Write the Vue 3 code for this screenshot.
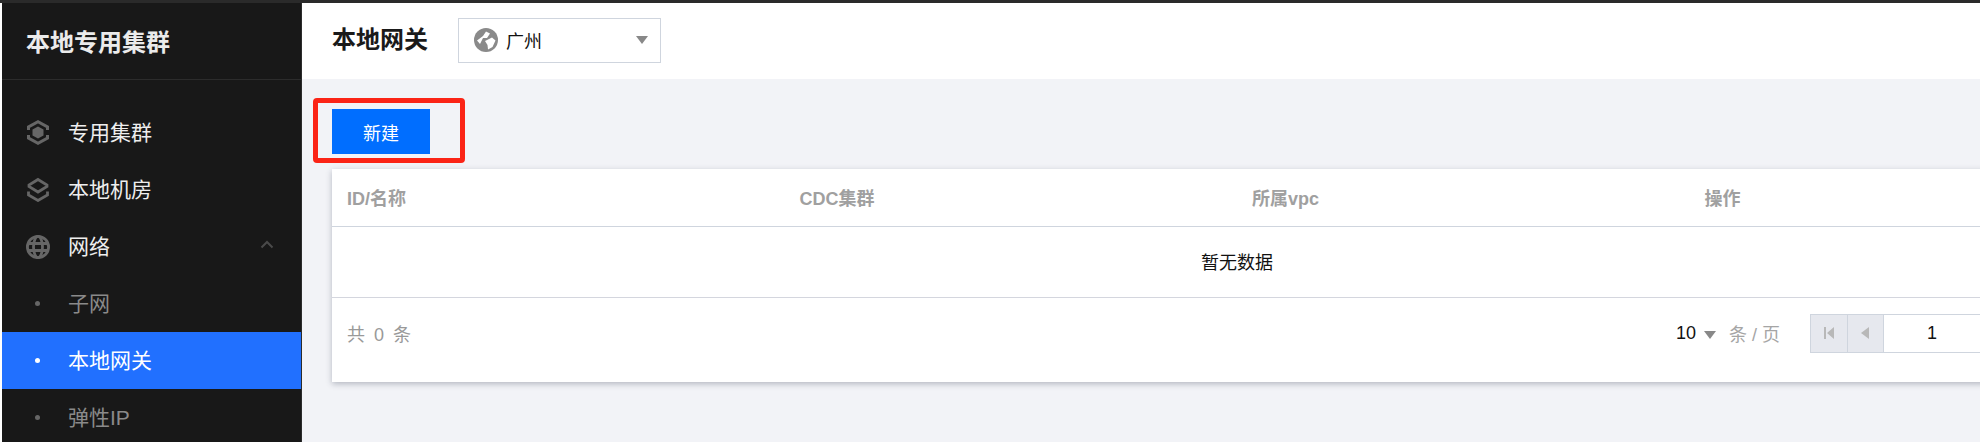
<script setup>
const columns = ['ID/名称', 'CDC集群', '所属vpc', '操作']
const topItems = [
  { label: '专用集群', icon: 'cluster' },
  { label: '本地机房', icon: 'layers' },
  { label: '网络', icon: 'globe', arrow: true }
]
const subItems = [
  { label: '子网' },
  { label: '本地网关', active: true },
  { label: '弹性IP' }
]
</script>

<template>
  <div class="page">
    <aside class="sidebar">
      <div class="side-head">本地专用集群</div>
      <nav class="menu">
        <div v-for="item in topItems" :key="item.label" class="item">
          <span class="icon-slot">
            <svg v-if="item.icon === 'cluster'" width="24" height="25" viewBox="0 0 24 25" fill="none">
              <path d="M2.500 10V7L12 1.800 21.500 7v3" stroke="#666" stroke-width="3"/>
              <path d="M2.500 15v3L12 23.200 21.500 18v-3" stroke="#666" stroke-width="3"/>
              <path d="M12 6.500l5.500 3v6l-5.500 3-5.500-3v-6z" fill="#666"/>
            </svg>
            <svg v-else-if="item.icon === 'layers'" width="24" height="25" viewBox="0 0 24 25" fill="none">
              <path d="M12 2.500 21 8v1.500L12 15 3 9.500V8z" stroke="#666" stroke-width="2.800"/>
              <path d="M2.500 14.500V18L12 23.500 21.500 18v-3.500" stroke="#666" stroke-width="2.800"/>
            </svg>
            <svg v-else width="24" height="24" viewBox="0 0 24 24" fill="none" stroke="#666" stroke-width="2.800">
              <circle cx="12" cy="12" r="10.600"/>
              <ellipse cx="12" cy="12" rx="4.500" ry="10.600"/>
              <path d="M2 8.500h20M2 15.500h20"/>
            </svg>
          </span>
          <span class="label">{{ item.label }}</span>
          <svg v-if="item.arrow" class="arrow" width="14" height="9" viewBox="0 0 14 9" fill="none">
            <path d="M1.500 7.500 7 2l5.500 5.500" stroke="#4a4a4a" stroke-width="2"/>
          </svg>
        </div>
        <div v-for="sub in subItems" :key="sub.label" class="item sub" :class="{ active: sub.active }">
          <span class="icon-slot"><i class="dot"></i></span>
          <span class="label">{{ sub.label }}</span>
        </div>
      </nav>
    </aside>

    <main class="main">
      <header class="topbar">
        <h1 class="title">本地网关</h1>
        <div class="region">
          <svg class="earth" width="24" height="24" viewBox="0 0 24 24">
            <circle cx="12" cy="12" r="12" fill="#8a8a8a"/>
            <path d="M3 12.500 9 8l3-4.500 4 2-3 4.500H9l-3 6zM11 13l7-3.500 3.500 3-3 6.500-4.500 2.500-.5-4.500z" fill="#fff"/>
          </svg>
          <span class="region-name">广州</span>
          <i class="caret"></i>
        </div>
      </header>

      <section class="content">
        <div class="toolbar">
          <button class="primary">新建</button>
          <div class="highlight"></div>
        </div>
        <div class="card">
          <div class="row thead">
            <div v-for="col in columns" :key="col" class="cell">{{ col }}</div>
          </div>
          <div class="empty">暂无数据</div>
          <div class="pager">
            <span class="total">共<b>0</b>条</span>
            <div class="pager-right">
              <span class="size">10</span>
              <i class="caret small"></i>
              <span class="per">条 / 页</span>
              <div class="pages">
                <span class="pbtn">
                  <svg width="10" height="12" viewBox="0 0 10 12"><path d="M0 0h2v12H0zM10 0v12L3 6z" fill="#b8b8b8"/></svg>
                </span>
                <span class="pbtn">
                  <svg width="8" height="12" viewBox="0 0 8 12"><path d="M8 0v12L0 6z" fill="#b8b8b8"/></svg>
                </span>
                <span class="pnum">1</span>
              </div>
            </div>
          </div>
        </div>
      </section>
    </main>
  </div>
</template>

<style>
html, body { margin: 0; background: #fff; overflow: hidden; }
</style>

<style scoped>
.page {
  width: 1980px;
  height: 442px;
  box-sizing: border-box;
  padding: 3px 0 0 2px;
  display: flex;
  overflow: hidden;
  font-family: "Liberation Sans", "Noto Sans CJK SC", sans-serif;
  background: linear-gradient(#2a2a2a, #2a2a2a) no-repeat 0 0 / 100% 3px, #fff;
}
.sidebar {
  width: 300px;
  box-sizing: border-box;
  flex: none;
  background: #181818;
  border-right: 1px solid #2c2c2c;
  color: #fff;
}
.side-head {
  height: 77px;
  box-sizing: border-box;
  padding: 0 0 2px 24px;
  display: flex;
  align-items: center;
  font-size: 24px;
  font-weight: 700;
  color: #ebebeb;
  border-bottom: 1px solid #2c2c2c;
}
.menu { padding-top: 24px; }
.item {
  height: 57px;
  display: flex;
  align-items: center;
  font-size: 21px;
  color: #eee;
  position: relative;
}
.icon-slot {
  width: 66px;
  padding-left: 24px;
  box-sizing: border-box;
  display: flex;
  align-items: center;
  flex: none;
}
.label { line-height: 1; }
.arrow { position: absolute; right: 27px; top: 22px; }
.sub { color: #8a8a8a; }
.sub.active { background: #2170ff; color: #fff; }
.dot { width: 5px; height: 5px; margin-left: 9px; border-radius: 50%; background: #666; }
.active .dot { background: #fff; }

.main { flex: 1; min-width: 0; display: flex; flex-direction: column; }
.topbar {
  height: 76px;
  box-sizing: border-box;
  flex: none;
  background: #fff;
  display: flex;
  align-items: center;
  padding: 0 0 2px 30px;
}
.title { margin: 0 30px 0 0; font-size: 24px; font-weight: 700; color: #1a1a1a; line-height: 1; }
.region {
  width: 203px;
  height: 45px;
  box-sizing: border-box;
  border: 1px solid #cfd5de;
  display: flex;
  align-items: center;
  padding: 0 12px 0 15px;
}
.earth { flex: none; }
.region-name { margin-left: 8px; font-size: 18px; color: #111; flex: 1; }
.caret {
  width: 0;
  height: 0;
  border-left: 6px solid transparent;
  border-right: 6px solid transparent;
  border-top: 8px solid #888;
}
.content { flex: 1; background: #f2f3f7; padding: 30px 0 0 30px; min-width: 0; }
.toolbar { position: relative; height: 60px; }
.primary {
  display: block;
  width: 98px;
  height: 45px;
  padding: 0;
  border: 0;
  background: #006eff;
  color: #fff;
  font: inherit;
  font-size: 18px;
}
.highlight {
  position: absolute;
  left: -19px;
  top: -11px;
  width: 152px;
  height: 65px;
  box-sizing: border-box;
  border: 5px solid #fb2416;
  border-radius: 4px;
}
.card {
  width: 1810px;
  background: #fff;
  box-shadow: 0 2px 6px rgba(50, 60, 80, .32);
}
.row { display: flex; }
.thead { height: 58px; box-sizing: border-box; align-items: center; padding-bottom: 2px; border-bottom: 1px solid #cfd5de; }
.cell {
  width: 452.500px;
  flex: none;
  padding-left: 15px;
  box-sizing: border-box;
  font-size: 18px;
  font-weight: 700;
  color: #a0a0a0;
}
.empty {
  height: 71px;
  box-sizing: border-box;
  border-bottom: 1px solid #d4d6de;
  display: flex;
  align-items: center;
  justify-content: center;
  padding-bottom: 2px;
  font-size: 18px;
  color: #111;
}
.pager {
  height: 84px;
  box-sizing: border-box;
  display: flex;
  align-items: center;
  justify-content: space-between;
  padding: 0 161px 14px 15px;
}
.total { font-size: 18px; color: #999; }
.total b { font-weight: 400; margin: 0 9px; }
.pager-right { display: flex; align-items: center; }
.size { font-size: 18px; color: #111; }
.pager-right .small { margin: 3px 0 0 8px; }
.per { font-size: 18px; color: #a5a5a5; margin: 0 30px 0 13px; }
.pages { display: flex; height: 39px; box-sizing: border-box; border: 1px solid #cfd5de; }
.pbtn {
  width: 36.500px;
  background: #e6e8ee;
  border-right: 1px solid #cfd5de;
  box-sizing: border-box;
  display: flex;
  align-items: center;
  justify-content: center;
}
.pnum { width: 96px; text-align: center; font-size: 18px; line-height: 37px; color: #111; }
</style>
